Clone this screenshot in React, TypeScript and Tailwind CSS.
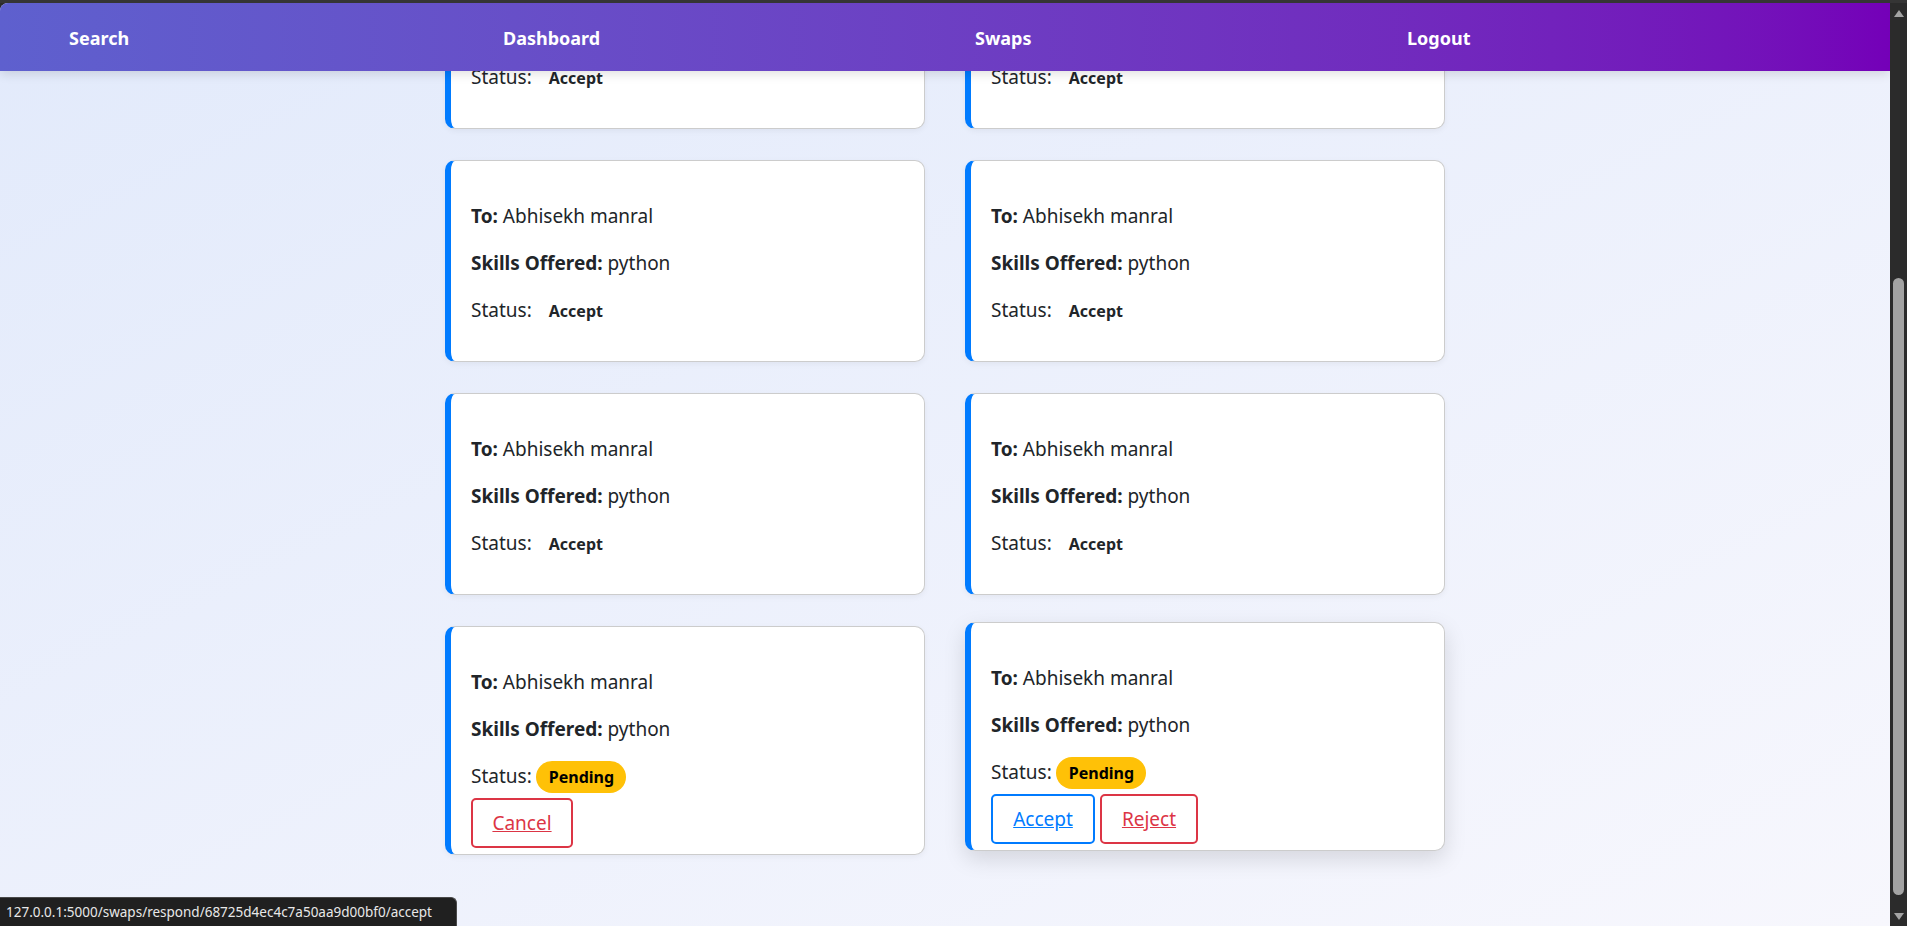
import React from "react";

type Swap = {
  to: string;
  skills: string;
  status: "Accept" | "Pending";
  mine?: boolean;
  hovered?: boolean;
};

const swaps: Swap[] = [
  { to: "Abhisekh manral", skills: "python", status: "Accept" },
  { to: "Abhisekh manral", skills: "python", status: "Accept" },
  { to: "Abhisekh manral", skills: "python", status: "Accept" },
  { to: "Abhisekh manral", skills: "python", status: "Accept" },
  { to: "Abhisekh manral", skills: "python", status: "Accept" },
  { to: "Abhisekh manral", skills: "python", status: "Accept" },
  { to: "Abhisekh manral", skills: "python", status: "Pending", mine: true },
  { to: "Abhisekh manral", skills: "python", status: "Pending", hovered: true },
];

function SwapCard({ swap }: { swap: Swap }) {
  const pending = swap.status === "Pending";

  return (
    <div
      className={
        "bg-white rounded-[10px] border border-[#cccccc] border-l-[6px] border-l-[#007bff] pl-[20px] pr-[20px] pt-[42px] " +
        (pending ? "pb-[6px] " : "pb-[37px] ") +
        (swap.hovered
          ? "-translate-y-[4px] shadow-[0_8px_22px_rgba(0,0,0,0.13)]"
          : "shadow-[0_2px_6px_rgba(0,0,0,0.05)]")
      }
    >
      <div className="flex flex-col gap-[20px] text-[19px] leading-[27px] text-[#212529]">
        <p>
          <span className="font-bold">To:</span> {swap.to}
        </p>
        <p>
          <span className="font-bold">Skills Offered:</span> {swap.skills}
        </p>
        <div className="flex items-center h-[27px]">
          <span>Status:</span>
          <span
            className={
              "ml-[4px] h-[32px] inline-flex items-center pl-[13px] pr-[12px] rounded-full text-[16px] leading-[20px] font-bold " +
              (pending ? "bg-[#ffc107] text-black" : "text-[#212529]")
            }
          >
            {swap.status}
          </span>
        </div>
      </div>

      {pending && (
        <div className="mt-[8px] flex gap-[5px] text-[19px]">
          {swap.mine ? (
            <a
              href="#"
              className="w-[102px] h-[50px] flex items-center justify-center border-2 border-[#dc3545] rounded-[5px] text-[#dc3545] underline"
            >
              Cancel
            </a>
          ) : (
            <>
              <a
                href="#"
                className="w-[104px] h-[50px] flex items-center justify-center border-2 border-[#007bff] rounded-[5px] text-[#007bff] underline"
              >
                Accept
              </a>
              <a
                href="#"
                className="w-[98px] h-[50px] flex items-center justify-center border-2 border-[#dc3545] rounded-[5px] text-[#dc3545] underline"
              >
                Reject
              </a>
            </>
          )}
        </div>
      )}
    </div>
  );
}

function Scrollbar() {
  return (
    <div className="w-[17px] shrink-0 bg-[#2b2b2b] flex flex-col items-center">
      <div className="h-[20px] flex items-center justify-center">
        <svg width="10" height="7" viewBox="0 0 10 7">
          <polygon points="5,0 10,7 0,7" fill="#a3a3a3" />
        </svg>
      </div>
      <div className="mt-[255px] h-[617px] w-[11px] rounded-full bg-[#a3a3a3]" />
      <div className="flex-1" />
      <div className="h-[20px] flex items-center justify-center">
        <svg width="10" height="7" viewBox="0 0 10 7">
          <polygon points="0,0 10,0 5,7" fill="#a3a3a3" />
        </svg>
      </div>
    </div>
  );
}

export default function App() {
  return (
    <div className="h-screen w-full overflow-hidden flex flex-col bg-[#2b2b2b] font-['Noto_Sans',_'Open_Sans',_sans-serif]">
      <div className="h-[3px] shrink-0 bg-[#353535]" />

      <div className="flex-1 flex min-h-0">
        <div className="flex-1 relative overflow-hidden rounded-tl-[8px] bg-linear-to-br from-[#e2eafb] to-[#f7f7fd]">
          {/* fixed top nav */}
          <nav className="absolute top-0 left-0 right-0 z-10 h-[68px] flex items-center pt-[3px] pl-[69px] bg-linear-to-r from-[#5e60ce] to-[#7400b8] shadow-[0_3px_10px_rgba(0,0,0,0.12)]">
            <a href="#" className="w-[434px] text-white font-bold text-[18px]">
              Search
            </a>
            <a href="#" className="w-[472px] text-white font-bold text-[18px]">
              Dashboard
            </a>
            <a href="#" className="w-[432px] text-white font-bold text-[18px]">
              Swaps
            </a>
            <a href="#" className="text-white font-bold text-[18px]">
              Logout
            </a>
          </nav>

          <main className="w-[1000px] mx-auto mt-[-76px] grid grid-cols-2 gap-x-[40px] gap-y-[31px] items-start">
            {swaps.map((s, i) => (
              <SwapCard key={i} swap={s} />
            ))}
          </main>

          {/* browser link preview */}
          <div className="absolute left-0 bottom-0 z-20 w-[457px] h-[29px] flex items-center pl-[6px] bg-[#202020] border-t border-r border-[#4a4a4a] rounded-tr-[6px] text-[#e8e8e8] text-[13.5px] whitespace-nowrap overflow-hidden">
            127.0.0.1:5000/swaps/respond/68725d4ec4c7a50aa9d00bf0/accept
          </div>
        </div>

        <Scrollbar />
      </div>
    </div>
  );
}
